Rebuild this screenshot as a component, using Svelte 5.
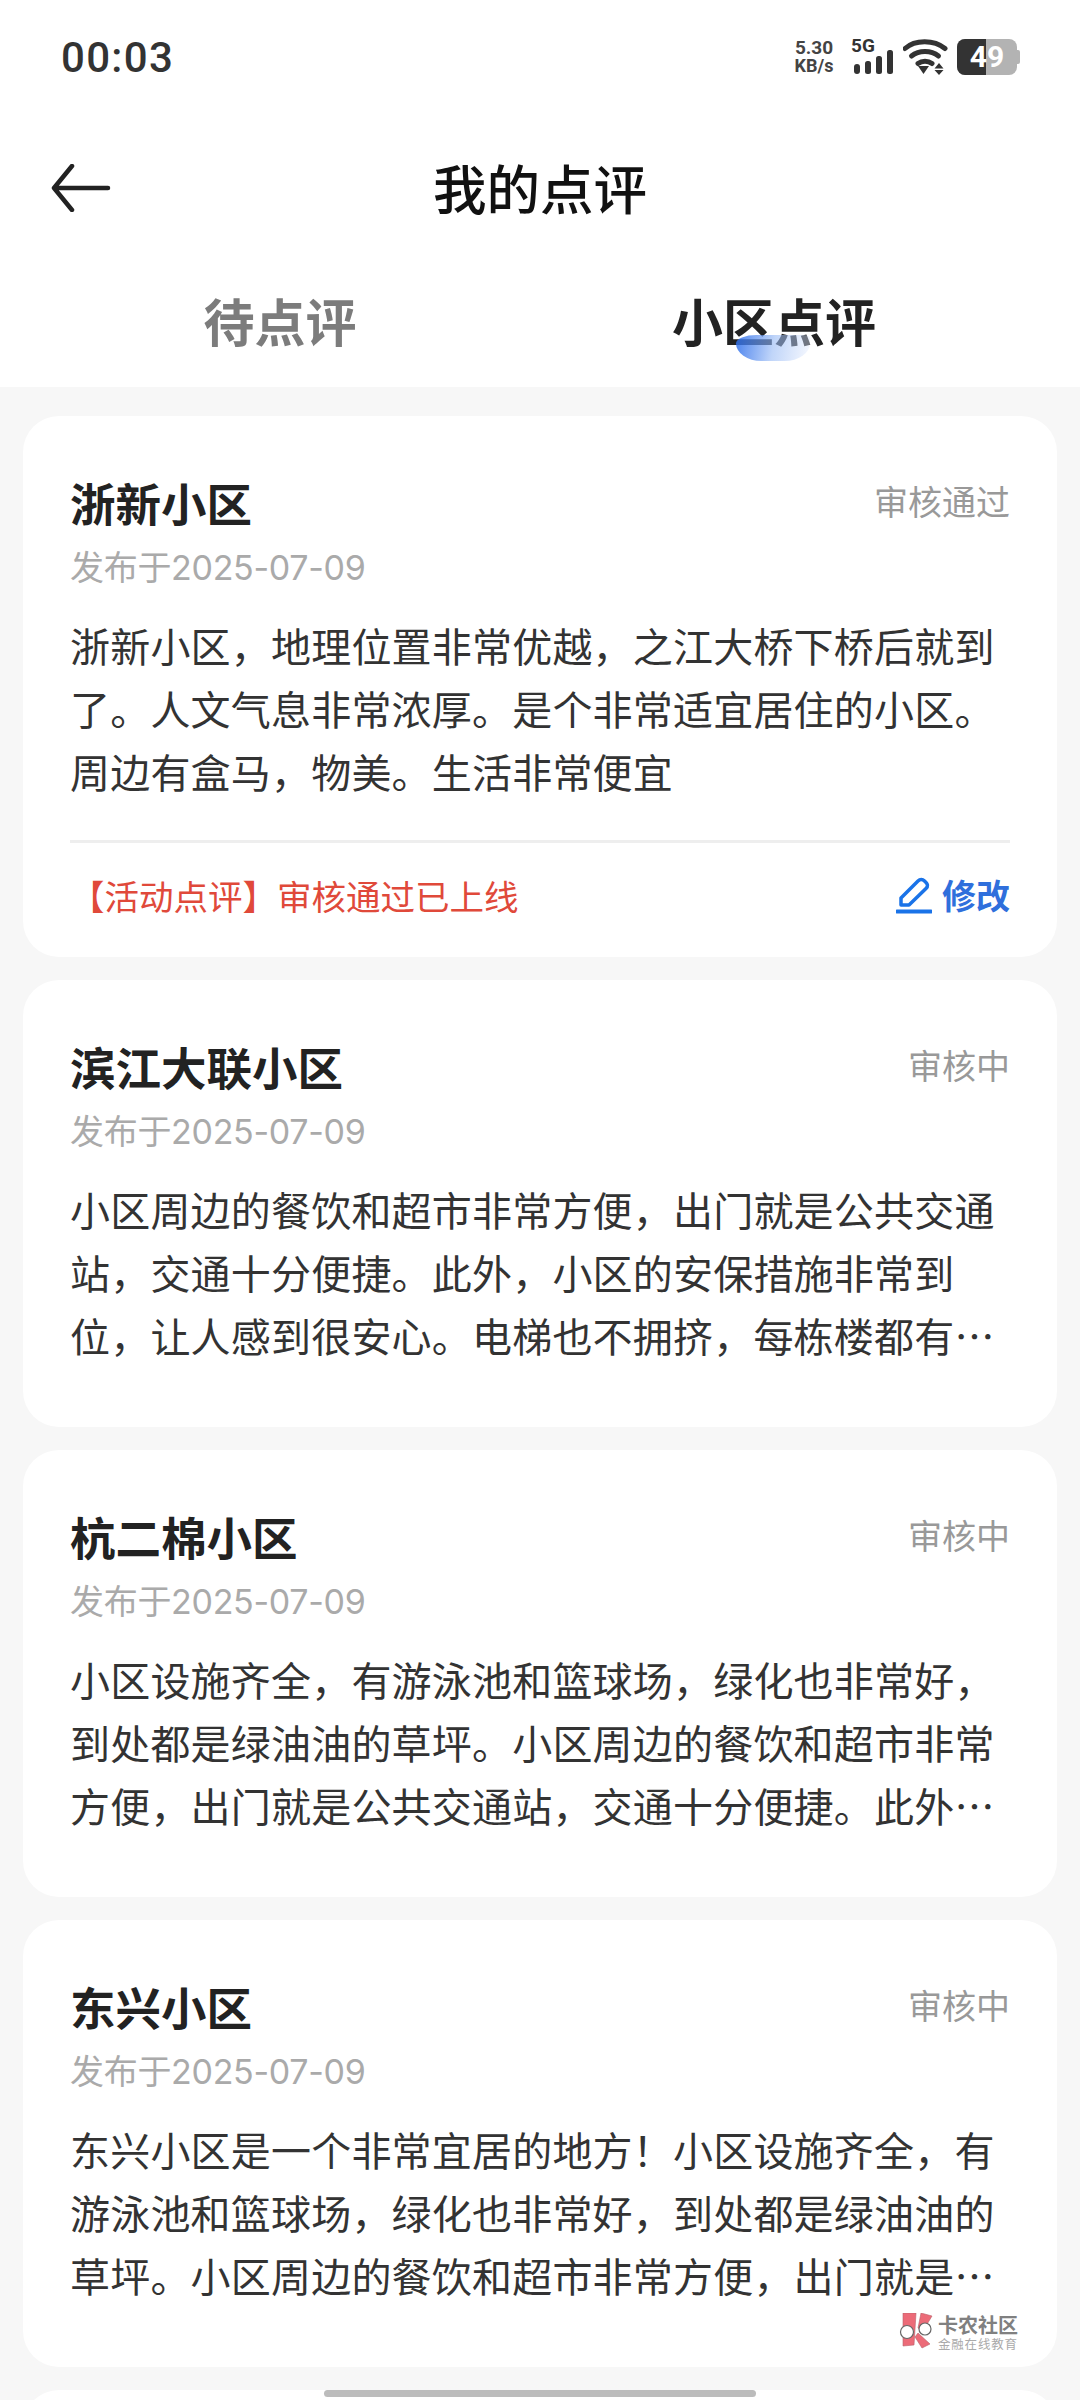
<script lang="ts">
  const reviews = [
    {
      name: '浙新小区',
      status: '审核通过',
      date: '发布于2025-07-09',
      text: '浙新小区，地理位置非常优越，之江大桥下桥后就到了。人文气息非常浓厚。是个非常适宜居住的小区。周边有盒马，物美。生活非常便宜',
      note: '【活动点评】审核通过已上线'
    },
    {
      name: '滨江大联小区',
      status: '审核中',
      date: '发布于2025-07-09',
      text: '小区周边的餐饮和超市非常方便，出门就是公共交通站，交通十分便捷。此外，小区的安保措施非常到位，让人感到很安心。电梯也不拥挤，每栋楼都有三部电梯，上下班高峰也不用等太久。'
    },
    {
      name: '杭二棉小区',
      status: '审核中',
      date: '发布于2025-07-09',
      text: '小区设施齐全，有游泳池和篮球场，绿化也非常好，到处都是绿油油的草坪。小区周边的餐饮和超市非常方便，出门就是公共交通站，交通十分便捷。此外，小区的安保措施非常到位。'
    },
    {
      name: '东兴小区',
      status: '审核中',
      date: '发布于2025-07-09',
      text: '东兴小区是一个非常宜居的地方！小区设施齐全，有游泳池和篮球场，绿化也非常好，到处都是绿油油的草坪。小区周边的餐饮和超市非常方便，出门就是公共交通站，交通十分便捷。'
    }
  ];
</script>

<div class="screen" lang="zh-CN">
  <header class="top">
    <div class="status-bar">
      <span class="time">00:03</span>
      <div class="status-icons">
        <div class="speed"><span>5.30</span><span>KB/s</span></div>
        <svg class="signal" width="42" height="36" viewBox="0 0 42 36">
          <text x="-1" y="13" class="five-g">5G</text>
          <rect x="2" y="25" width="6" height="10" rx="3" />
          <rect x="13" y="22" width="6" height="13" rx="2.5" />
          <rect x="24" y="17" width="6" height="18" rx="2.5" />
          <rect x="35" y="11" width="6" height="24" rx="2.5" />
        </svg>
        <svg class="wifi" width="46" height="36" viewBox="0 0 46 36">
          <path d="M2 9.500C12 .5 31 .5 42 9.500" />
          <path d="M8.500 17C16 11 28 11 35.500 17" />
          <path d="M15 24.500C19 21.500 25 21.500 29 24.500" />
          <path class="fill" d="M15 27h11L20.500 35z" />
          <path class="fill" d="M36 24l-4.500 5.500h9zM36 36l-4.500-5h9z" />
        </svg>
        <div class="battery">
          <div class="battery-body"><div class="battery-level"></div><span>49</span></div>
          <div class="battery-cap"></div>
        </div>
      </div>
    </div>

    <div class="nav">
      <svg class="back" width="60" height="48" viewBox="0 0 60 48">
        <path d="M21 2L3 24l18 22M3 24h54" />
      </svg>
      <h1>我的点评</h1>
    </div>

    <div class="tabs">
      <span class="tab">待点评</span>
      <span class="tab active">小区点评<i class="blob"></i></span>
    </div>
  </header>

  <main class="list">
    {#each reviews as r}
      <article class="card">
        <div class="card-head">
          <h2>{r.name}</h2>
          <span class="status">{r.status}</span>
        </div>
        <div class="date">{r.date}</div>
        <p class="body">{r.text}</p>
        {#if r.note}
          <div class="card-foot">
            <span class="note">{r.note}</span>
            <span class="edit">
              <svg width="36" height="38" viewBox="0 0 36 38">
                <path class="pen" d="M5 22L22 5c2-2 4.500-2 6.500 0l1.500 1.500c2 2 2 4 0 6L13 29H5z" />
                <path class="pen-line" d="M1 35.500h34" />
              </svg>
              修改
            </span>
          </div>
        {/if}
      </article>
    {/each}
    <article class="card"></article>
  </main>

  <div class="watermark">
    <svg width="36" height="36" viewBox="0 0 36 36">
      <path d="M5 0h13l-2 32-11 1zM23 0l11 3-9 15-5-3zM20 20l12 11-8 4-7-11z" fill="#ec6b78" stroke="#b9616b" stroke-width=".6" />
      <circle cx="9" cy="19" r="6.500" fill="#fff" stroke="#666" stroke-width="1.200" />
      <circle cx="27" cy="16" r="6" fill="#fff" stroke="#666" stroke-width="1.200" />
    </svg>
    <div class="wm-text">
      <b>卡农社区</b>
      <span>金融在线教育</span>
    </div>
  </div>

  <div class="home-bar"></div>
</div>

<style>
  :global(body) {
    margin: 0;
    background: #f7f7f7;
  }

  .screen {
    position: relative;
    width: 1080px;
    height: 2400px;
    overflow: hidden;
    background: #f7f7f7;
    font-family: 'Noto Sans CJK SC', 'Noto Sans', sans-serif;
    color: #222;
  }

  .top {
    height: 387px;
    background: #fff;
    display: flex;
    flex-direction: column;
  }

  .status-bar {
    height: 114px;
    display: flex;
    justify-content: space-between;
    align-items: center;
    padding: 0 60px 0 61px;
    box-sizing: border-box;
  }

  .time {
    font-family: 'Roboto', sans-serif;
    font-size: 42px;
    font-weight: 500;
    letter-spacing: 1.3px;
    color: #333;
  }

  .status-icons {
    display: flex;
    align-items: center;
    height: 40px;
  }

  .speed {
    display: flex;
    flex-direction: column;
    align-items: center;
    width: 46px;
    margin-right: 15px;
    font-family: 'Roboto', sans-serif;
    font-size: 19px;
    line-height: 18px;
    font-weight: 700;
    color: #444;
  }

  .speed span:last-child {
    font-size: 18px;
  }

  .signal {
    fill: #333;
    margin-right: 9px;
    overflow: visible;
  }

  .five-g {
    font-family: 'Roboto', sans-serif;
    font-size: 19px;
    font-weight: 700;
  }

  .wifi path {
    fill: none;
    stroke: #333;
    stroke-width: 5px;
    stroke-linecap: round;
  }

  .wifi path.fill {
    fill: #333;
    stroke: none;
  }

  .battery {
    display: flex;
    align-items: center;
    margin-left: 8px;
  }

  .battery-body {
    position: relative;
    width: 60px;
    height: 36px;
    border-radius: 8px;
    overflow: hidden;
    background: #b3b3b3;
  }

  .battery-level {
    width: 29px;
    height: 100%;
    background: #333;
  }

  .battery-body span {
    position: absolute;
    inset: 0;
    text-align: center;
    font-family: 'Roboto', sans-serif;
    font-size: 30px;
    line-height: 36px;
    font-weight: 700;
    color: #fff;
  }

  .battery-cap {
    width: 3px;
    height: 14px;
    background: #b3b3b3;
    border-radius: 0 2px 2px 0;
  }

  .nav {
    position: relative;
    height: 148px;
    display: flex;
    align-items: center;
    justify-content: center;
  }

  .back {
    position: absolute;
    left: 51px;
    top: 50px;
    fill: none;
    stroke: #222;
    stroke-width: 4.500px;
    stroke-linecap: round;
    stroke-linejoin: round;
  }

  h1 {
    margin: 0 0 2px;
    font-size: 53.500px;
    line-height: 60px;
    font-weight: 500;
    color: #111;
  }

  .tabs {
    display: grid;
    grid-template-columns: 560px 1fr;
    margin-top: 23px;
  }

  .tab {
    justify-self: center;
    position: relative;
    font-size: 51px;
    line-height: 70px;
    font-weight: 700;
    color: #7c7c7c;
  }

  .tab.active {
    color: #222;
    justify-self: start;
    margin-left: 112px;
  }

  .blob {
    position: absolute;
    left: 64px;
    top: 50px;
    width: 74px;
    height: 26px;
    border-radius: 30px 10px 37px 37px / 12px 4px 26px 26px;
    background: linear-gradient(100deg, rgba(45, 110, 235, 0.85), rgba(150, 185, 245, 0.6) 50%, rgba(235, 240, 254, 0.4));
  }

  .list {
    display: flex;
    flex-direction: column;
    gap: 23px;
    padding: 29px 23px 0;
  }

  .card {
    background: #fff;
    border-radius: 36px;
    padding: 0 47px;
    min-height: 447px;
    box-sizing: border-box;
  }

  .card-head {
    display: flex;
    justify-content: space-between;
    align-items: center;
    padding-top: 56px;
  }

  h2 {
    margin: 0;
    font-size: 45.500px;
    line-height: 60px;
    font-weight: 700;
    color: #222;
  }

  .status {
    font-size: 34px;
    line-height: 60px;
    color: #999;
    margin-top: -2px;
  }

  .date {
    font-family: 'Inter', 'Noto Sans CJK SC', sans-serif;
    font-size: 34px;
    letter-spacing: -0.3px;
    line-height: 48px;
    margin-top: 12px;
    color: #aaa;
  }

  .body {
    margin: 22px 0 0;
    font-size: 40px;
    letter-spacing: 0.2px;
    line-height: 63px;
    color: #333;
    display: -webkit-box;
    -webkit-box-orient: vertical;
    -webkit-line-clamp: 3;
    overflow: hidden;
  }

  .card-foot {
    display: flex;
    justify-content: space-between;
    align-items: center;
    margin-top: 37px;
    border-top: 3px solid #eee;
    height: 117px;
    padding-bottom: 11px;
    box-sizing: border-box;
  }

  .note {
    font-size: 34.500px;
    color: #e0493a;
  }

  .edit {
    display: flex;
    align-items: center;
    gap: 10px;
    font-size: 34px;
    font-weight: 700;
    color: #2f6fdc;
  }

  .pen {
    fill: none;
    stroke: #1a73e8;
    stroke-width: 3.500px;
    stroke-linejoin: round;
  }

  .pen-line {
    stroke: #1a73e8;
    stroke-width: 4px;
    stroke-linecap: round;
  }

  .watermark {
    position: absolute;
    left: 898px;
    top: 2313px;
    display: flex;
    gap: 4px;
    align-items: flex-start;
  }

  .wm-text {
    display: flex;
    flex-direction: column;
    width: 80px;
  }

  .wm-text b {
    font-size: 20px;
    line-height: 24px;
    font-weight: 700;
    color: #808080;
  }

  .wm-text span {
    font-size: 12.500px;
    line-height: 14px;
    letter-spacing: 0.8px;
    color: #aaa;
  }

  .home-bar {
    position: absolute;
    left: 324px;
    top: 2390px;
    width: 432px;
    height: 7px;
    border-radius: 4px;
    background: #bcbcbc;
  }
</style>
